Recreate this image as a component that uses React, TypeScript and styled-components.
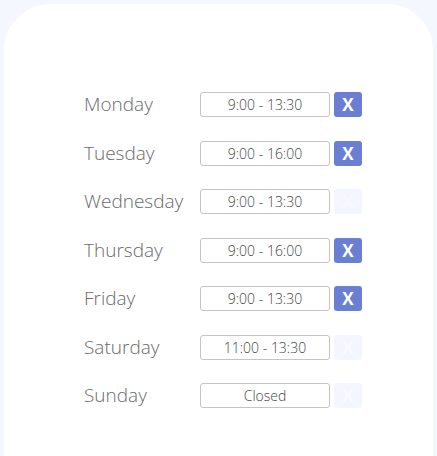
import styled, { createGlobalStyle } from "styled-components";

const GlobalStyle = createGlobalStyle`
    html, body {
        margin: 0;
        padding: 0;
        background: #f5f7ff;
        font-family: "Open Sans", "Liberation Sans", sans-serif;
    }
`;

const hours = [
    { day: "Monday", time: "9:00 - 13:30", open: true },
    { day: "Tuesday", time: "9:00 - 16:00", open: true },
    { day: "Wednesday", time: "9:00 - 13:30", open: false },
    { day: "Thursday", time: "9:00 - 16:00", open: true },
    { day: "Friday", time: "9:00 - 13:30", open: true },
    { day: "Saturday", time: "11:00 - 13:30", open: false },
    { day: "Sunday", time: "Closed", open: false },
];

const App = () => {
    return (
        <>
            <GlobalStyle />
            <Page>
                <Card>
                    <List>
                        {hours.map(item => (
                            <Row key={item.day}>
                                <Day>{item.day}</Day>
                                <TimeInput readOnly value={item.time} />
                                <RemoveButton $active={item.open}>X</RemoveButton>
                            </Row>
                        ))}
                    </List>
                </Card>
            </Page>
        </>
    );
};

const Page = styled.div`
    width: 437px;
    height: 456px;
    padding: 4px 4px 0 4px;
    box-sizing: border-box;
    overflow: hidden;
`;

const Card = styled.div`
    background: #ffffff;
    border-radius: 46px 46px 0 0;
    height: 500px;
    padding: 88px 0 0 80px;
    box-sizing: border-box;
`;

const List = styled.div`
    display: flex;
    flex-direction: column;
    gap: 23.5px;
`;

const Row = styled.div`
    display: flex;
    align-items: center;
    height: 25px;
`;

const Day = styled.div`
    width: 116px;
    font-size: 19px;
    font-weight: 300;
    color: #6a6a6a;
    margin-top: -1px;
    white-space: nowrap;
`;

const TimeInput = styled.input`
    width: 130px;
    height: 25px;
    box-sizing: border-box;
    border: 1px solid #c4c4c4;
    border-radius: 3px;
    padding: 0;
    text-align: center;
    font-family: "Open Sans", "Liberation Sans", sans-serif;
    font-size: 14px;
    font-weight: 300;
    color: #444;
    outline: none;
`;

const RemoveButton = styled.button<{ $active: boolean }>`
    width: 28px;
    height: 25px;
    margin-left: 4px;
    border: none;
    border-radius: 3px;
    padding: 0;
    background: ${p => (p.$active ? "#6a7fd2" : "#f4f6ff")};
    color: ${p => (p.$active ? "#ffffff" : "#f9faff")};
    font-family: "Open Sans", "Liberation Sans", sans-serif;
    font-weight: 700;
    font-size: 17px;
    cursor: pointer;
`;

export default App;
